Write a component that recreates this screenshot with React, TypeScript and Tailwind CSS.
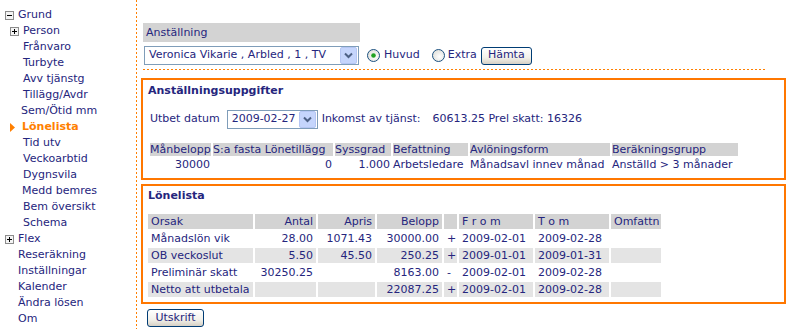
import type { ReactNode } from "react";

type NavItem = { label: string; x: number; icon?: "minus" | "plus" | "arrow"; iconX?: number; active?: boolean };

const NAV: NavItem[] = [
  { label: "Grund", x: 18, icon: "minus", iconX: 5 },
  { label: "Person", x: 23, icon: "plus", iconX: 10 },
  { label: "Frånvaro", x: 23 },
  { label: "Turbyte", x: 23 },
  { label: "Avv tjänstg", x: 23 },
  { label: "Tillägg/Avdr", x: 23 },
  { label: "Sem/Ötid mm", x: 21 },
  { label: "Lönelista", x: 22, icon: "arrow", iconX: 10, active: true },
  { label: "Tid utv", x: 23 },
  { label: "Veckoarbtid", x: 23 },
  { label: "Dygnsvila", x: 23 },
  { label: "Medd bemres", x: 22 },
  { label: "Bem översikt", x: 23 },
  { label: "Schema", x: 23 },
  { label: "Flex", x: 18, icon: "plus", iconX: 5 },
  { label: "Reseräkning", x: 18 },
  { label: "Inställningar", x: 18 },
  { label: "Kalender", x: 18 },
  { label: "Ändra lösen", x: 18 },
  { label: "Om", x: 18 },
];

function TreeIcon({ kind }: { kind: "minus" | "plus" | "arrow" }) {
  if (kind === "arrow") {
    return (
      <svg width="6" height="9" viewBox="0 0 6 9">
        <path d="M0 0 L5 4.5 L0 9 Z" fill="#ff7f00" />
      </svg>
    );
  }
  return (
    <svg width="9" height="9" viewBox="0 0 9 9">
      <rect x="0.5" y="0.5" width="8" height="8" fill="#f4f4f4" stroke="#8c8c8c" />
      <path d="M2 4.5 H7" stroke="#000" />
      {kind === "plus" && <path d="M4.5 2 V7" stroke="#000" />}
    </svg>
  );
}

function Sidebar() {
  return (
    <nav className="w-[136px] shrink-0 pt-[7px]">
      {NAV.map((item) => (
        <div key={item.label} className="relative h-[16px] leading-[16px]">
          {item.icon && (
            <span
              className="absolute top-[3px] flex h-[10px] items-center"
              style={{ left: item.iconX }}
            >
              <TreeIcon kind={item.icon} />
            </span>
          )}
          <span
            className={`absolute whitespace-nowrap ${item.active ? "font-bold text-[#ff7f00]" : ""}`}
            style={{ left: item.x }}
          >
            {item.label}
          </span>
        </div>
      ))}
    </nav>
  );
}

function Chevron() {
  return (
    <span className="flex h-[17px] w-[17px] items-center justify-center rounded-[2px] border border-[#b5c6f3] bg-[#c5d5fc]">
      <svg width="9" height="7" viewBox="0 0 9 7">
        <path d="M1 1.5 L4.5 5 L8 1.5" fill="none" stroke="#4d6185" strokeWidth="2" />
      </svg>
    </span>
  );
}

function Select({ value, className }: { value: string; className: string }) {
  return (
    <div className={`flex items-center justify-between border border-[#7f9db9] bg-white pl-[4px] pr-[1px] ${className}`}>
      <span className="whitespace-nowrap">{value}</span>
      <Chevron />
    </div>
  );
}

function Radio({ checked }: { checked?: boolean }) {
  return (
    <svg width="13" height="13" viewBox="0 0 13 13">
      <defs>
        <radialGradient id="rg" cx="0.6" cy="0.6" r="0.7">
          <stop offset="0" stopColor="#ffffff" />
          <stop offset="1" stopColor="#dcdcd6" />
        </radialGradient>
      </defs>
      <circle cx="6.5" cy="6.5" r="6" fill="url(#rg)" stroke="#1c5180" />
      {checked && <circle cx="6.5" cy="6.5" r="2.3" fill="#21a121" />}
    </svg>
  );
}

function XpButton({ children, className }: { children: ReactNode; className: string }) {
  return (
    <span
      className={`flex items-center justify-center rounded-[3px] border border-[#003c74] bg-[linear-gradient(to_bottom,#ffffff,#f2f1ea_60%,#d6d0c5)] ${className}`}
    >
      {children}
    </span>
  );
}

const INFO_COLS = [
  { label: "Månbelopp", w: "w-[61px]", value: "30000", right: true },
  { label: "S:a fasta Lönetillägg", w: "w-[120px]", value: "0", right: true },
  { label: "Syssgrad", w: "w-[56px]", value: "1.000", right: true },
  { label: "Befattning", w: "w-[75px]", value: "Arbetsledare", right: false },
  { label: "Avlöningsform", w: "w-[140px]", value: "Månadsavl innev månad", right: false },
  { label: "Beräkningsgrupp", w: "w-[126px]", value: "Anställd > 3 månader", right: false },
];

const LON_ROWS = [
  ["Månadslön vik", "28.00", "1071.43", "30000.00", "+", "2009-02-01", "2009-02-28", ""],
  ["OB veckoslut", "5.50", "45.50", "250.25", "+", "2009-01-01", "2009-01-31", ""],
  ["Preliminär skatt", "30250.25", "", "8163.00", "-", "2009-02-01", "2009-02-28", ""],
  ["Netto att utbetala", "", "", "22087.25", "+", "2009-02-01", "2009-02-28", ""],
];

const LON_COLS = [
  { label: "Orsak", w: "w-[105px]", right: false },
  { label: "Antal", w: "w-[61px]", right: true },
  { label: "Apris", w: "w-[57px]", right: true },
  { label: "Belopp", w: "w-[65px]", right: true },
  { label: "", w: "w-[13px]", right: false },
  { label: "F r o m", w: "w-[74px]", right: false },
  { label: "T o m", w: "w-[74px]", right: false },
  { label: "Omfattn", w: "w-[50px]", right: false },
];

export default function App() {
  return (
    <div className="flex min-h-[329px] bg-white font-['DejaVu_Sans',Verdana,sans-serif] text-[11px] text-[#25257d]">
      <Sidebar />
      <div className="w-px shrink-0 self-stretch bg-[repeating-linear-gradient(to_bottom,#ff7f00_0_2px,transparent_2px_4px)]" />

      <main className="pl-[4px] pt-[23px]">
        <div className="ml-[2px] h-[19px] w-[217px] bg-[#d3d3d3] pl-[3px] leading-[19px]">Anställning</div>
        <div className="mt-[4px] flex items-center">
          <Select value="Veronica Vikarie , Arbled , 1 , TV" className="ml-[3px] h-[19px] w-[215px]" />
          <span className="ml-[8px] flex items-center gap-[4px]">
            <Radio checked />
            <span>Huvud</span>
          </span>
          <span className="ml-[12px] flex items-center gap-[3px]">
            <Radio />
            <span>Extra</span>
          </span>
          <XpButton className="ml-[4px] h-[18px] w-[51px]">Hämta</XpButton>
        </div>
        <div className="ml-[2px] mt-[4px] h-px w-[622px] bg-[repeating-linear-gradient(to_right,#ff7f00_0_2px,transparent_2px_4px)]" />

        <section className="mt-[8px] h-[102px] w-[645px] border-2 border-[#ff7700] pl-[5px] pt-[3px]">
          <h2 className="font-bold leading-[16px]">Anställningsuppgifter</h2>
          <div className="mt-[11px] flex items-center">
            <span className="ml-[2px]">Utbet datum</span>
            <Select value="2009-02-27" className="ml-[7px] h-[19px] w-[91px]" />
            <span className="ml-[4px] whitespace-nowrap">Inkomst av tjänst:</span>
            <span className="ml-[12px] whitespace-nowrap">60613.25 Prel skatt: 16326</span>
          </div>
          <table className="mt-[12px] w-[592px] table-fixed border-separate border-spacing-[2px] whitespace-nowrap">
            <thead>
              <tr>
                {INFO_COLS.map((c) => (
                  <th key={c.label} className={`h-[13px] overflow-visible bg-[#d3d3d3] p-0 text-left font-normal leading-[13px] ${c.w}`}>
                    {c.label}
                  </th>
                ))}
              </tr>
            </thead>
            <tbody>
              <tr className="leading-[14px]">
                {INFO_COLS.map((c) => (
                  <td key={c.label} className={`p-0 ${c.right ? "pr-[1px] text-right" : "text-left"}`}>
                    {c.value}
                  </td>
                ))}
              </tr>
            </tbody>
          </table>
        </section>

        <section className="mt-[4px] h-[120px] w-[645px] border-2 border-[#ff7700] pl-[5px] pt-[2px]">
          <h2 className="font-bold leading-[16px]">Lönelista</h2>
          <table className="-ml-[2px] mt-[8px] w-[517px] table-fixed border-separate border-spacing-[2px] whitespace-nowrap">
            <thead>
              <tr>
                {LON_COLS.map((c, i) => (
                  <th
                    key={i}
                    className={`h-[15px] bg-[#d3d3d3] px-[3px] font-normal leading-[15px] ${c.w} ${c.right ? "text-right" : "text-left"}`}
                  >
                    {c.label}
                  </th>
                ))}
              </tr>
            </thead>
            <tbody>
              {LON_ROWS.map((row, r) => (
                <tr key={r}>
                  {row.map((cell, i) => (
                    <td
                      key={i}
                      className={`h-[15px] px-[3px] leading-[15px] ${r % 2 === 1 ? "bg-[#e4e4e4]" : ""} ${LON_COLS[i].right ? "text-right" : "text-left"}`}
                    >
                      {cell}
                    </td>
                  ))}
                </tr>
              ))}
            </tbody>
          </table>
        </section>

        <XpButton className="ml-[6px] mt-[5px] h-[18px] w-[57px]">Utskrift</XpButton>
      </main>
    </div>
  );
}
